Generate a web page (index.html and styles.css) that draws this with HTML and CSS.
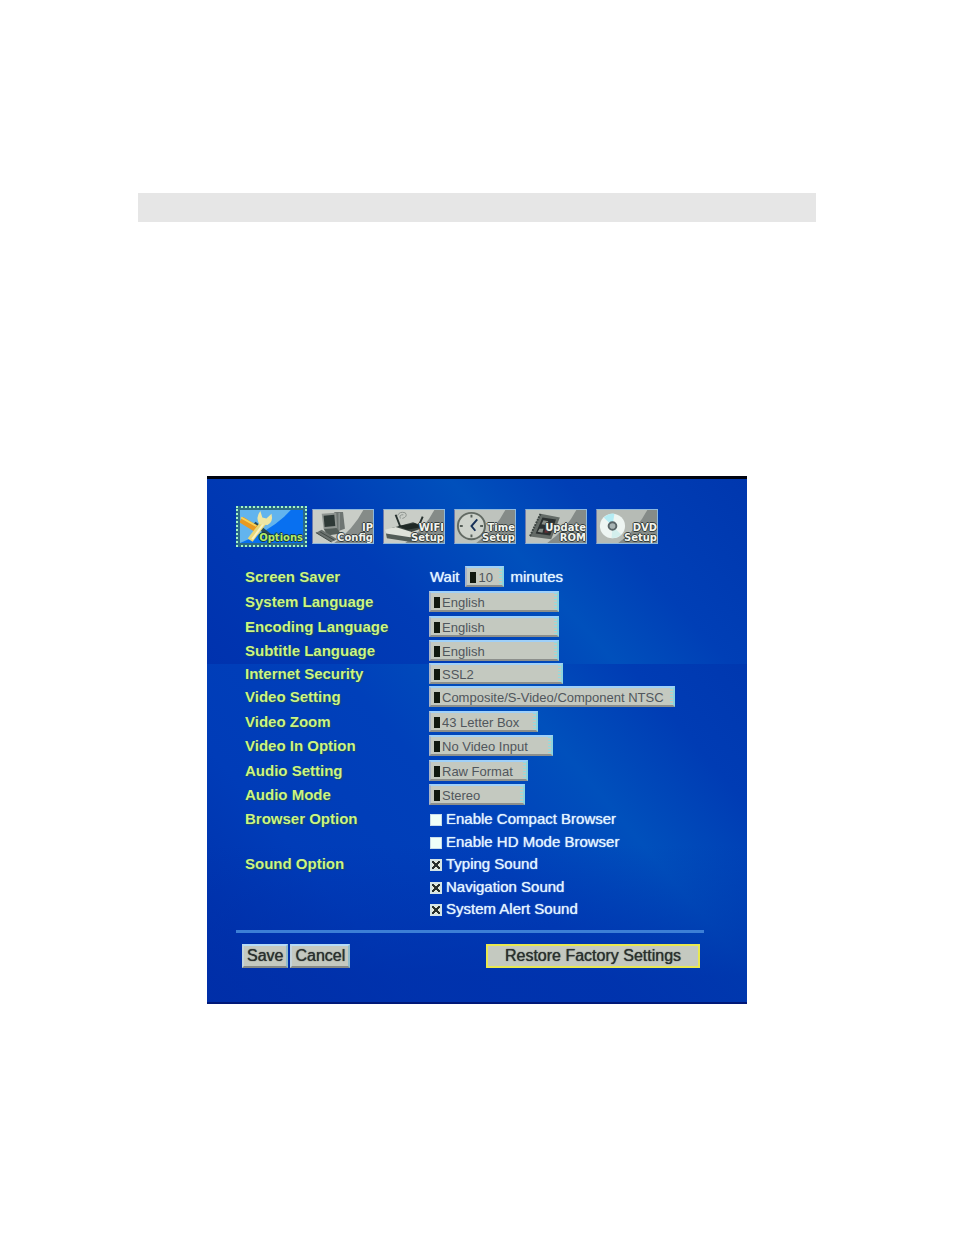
FILE: index.html
```html
<!DOCTYPE html>
<html lang="en">
<head>
<meta charset="utf-8">
<title>Options</title>
<link rel="stylesheet" href="styles.css">
</head>
<body>
<main class="page">
  <div class="band"></div>
  <form class="screen">
    <nav class="tabs">
      <a class="tab tab-active" href="#options">
        <svg class="art" viewBox="0 0 62 35" preserveAspectRatio="none" aria-hidden="true">
          <rect width="62" height="35" fill="#0870f0"/><path d="M0 0H50Q34 20 0 35Z" fill="#62b4ee"/>
          <path d="M14 14L34 31" stroke="#274a58" stroke-width="4" fill="none"/>
          <path d="M1 10L16 20" stroke="#e99a22" stroke-width="7"/><path d="M1 8L16 17" stroke="#f6d45a" stroke-width="2"/>
          <path d="M10 32L24 12" stroke="#e8d878" stroke-width="6"/><path d="M12 31L25 12" stroke="#f7f1c4" stroke-width="2"/>
          <path d="M20 1L22 8L26 9L31 4Q33 13 27 16L19 15Q15 8 20 1Z" fill="#efe6a2"/>
        </svg>
        <span class="caption">Options</span>
      </a>
      <a class="tab" href="#ip">
        <svg class="art" viewBox="0 0 62 35" preserveAspectRatio="none" aria-hidden="true">
          <rect width="62" height="35" fill="#858b88"/><path d="M0 0H52Q42 20 22 35H0Z" fill="#c9cdc7"/>
          <path d="M22 2L31 2L33 20L24 23Z" fill="#6e7572"/><path d="M27 3V21" stroke="#a2a8a4"/>
          <path d="M9 4L24 3L25 19L11 20Z" fill="#8e9490"/>
          <path d="M11 6L22 5L23 17L12 18Z" fill="#2e3936"/><path d="M11 20L24 19L29 25L15 27Z" fill="#555e5a"/>
          <path d="M3 24L9 21L25 31L19 34Z" fill="#6b726f"/><path d="M3 24L19 34M7 23L22 32" stroke="#3f4744"/>
        </svg>
        <span class="caption">IP<br>Config</span>
      </a>
      <a class="tab" href="#wifi">
        <svg class="art" viewBox="0 0 62 35" preserveAspectRatio="none" aria-hidden="true">
          <rect width="62" height="35" fill="#858b88"/><path d="M0 0H52Q42 20 22 35H0Z" fill="#c9cdc7"/>
          <path d="M14 6Q16 1 22 3Q25 7 19 9M17 9Q15 5 20 5" stroke="#8c928e" fill="none"/>
          <path d="M12 5L17 18M40 7L35 19" stroke="#26302e" stroke-width="2"/>
          <path d="M8 19L30 13L43 18L24 25Z" fill="#3d4643"/><path d="M14 17L32 14L40 18L24 21Z" fill="#1f2826"/>
          <path d="M1 21L12 18L28 23L27 30L3 26Z" fill="#dfe2db"/><path d="M2 25L27 29L38 24L38 29L28 34L3 30Z" fill="#535c58"/>
        </svg>
        <span class="caption">WIFI<br>Setup</span>
      </a>
      <a class="tab" href="#time">
        <svg class="art" viewBox="0 0 62 35" preserveAspectRatio="none" aria-hidden="true">
          <rect width="62" height="35" fill="#858b88"/><path d="M0 0H52Q42 20 22 35H0Z" fill="#bec3bd"/>
          <circle cx="17" cy="17" r="14" fill="#ced3cc" stroke="#626a63" stroke-width="2"/>
          <path d="M17 5V8M17 26V29M5 17H8M26 17H29" stroke="#555e58" stroke-width="2"/>
          <path d="M23 10L17 17L21 22" stroke="#173058" stroke-width="2" fill="none"/>
        </svg>
        <span class="caption">Time<br>Setup</span>
      </a>
      <a class="tab" href="#update">
        <svg class="art" viewBox="0 0 62 35" preserveAspectRatio="none" aria-hidden="true">
          <rect width="62" height="35" fill="#858b88"/><path d="M0 0H52Q42 20 22 35H0Z" fill="#bec3bd"/>
          <path d="M15 4L35 8L26 31L4 28Z" fill="#646b67"/><path d="M15 4L4 28" stroke="#3b4340" stroke-width="2" stroke-dasharray="2 1"/>
          <path d="M17 8L31 10L25 27L10 25Z" fill="#2b3030"/>
          <path d="M18 11L23 12L21 16L16 15ZM14 20L18 20L17 24L12 23Z" fill="#888f8a"/><path d="M20 19L25 19L23 24L19 24Z" fill="#643036"/>
        </svg>
        <span class="caption">Update<br>ROM</span>
      </a>
      <a class="tab" href="#dvd">
        <svg class="art" viewBox="0 0 62 35" preserveAspectRatio="none" aria-hidden="true">
          <rect width="62" height="35" fill="#858b88"/><path d="M0 0H52Q42 20 22 35H0Z" fill="#b6bbb5"/>
          <circle cx="16" cy="17" r="13" fill="#eef5f2"/><path d="M16 17L7 8Q13 3 18 4Z" fill="#b4ecf4"/><path d="M16 17L25 26Q21 30 15 30Z" fill="#d3efec"/>
          <circle cx="16" cy="17" r="4" fill="#a8b3b3" stroke="#596466" stroke-width="2"/>
        </svg>
        <span class="caption">DVD<br>Setup</span>
      </a>
    </nav>

    <div class="settings">
      <label class="name" for="saver">Screen Saver</label>
      <div class="value inline"><span>Wait</span><select class="pick pick-num" id="saver"><option>10</option></select><span>minutes</span></div>
      <label class="name" for="syslang">System Language</label>
      <div class="value"><select class="pick pick-lang" id="syslang"><option>English</option></select></div>
      <label class="name" for="enclang">Encoding Language</label>
      <div class="value"><select class="pick pick-lang" id="enclang"><option>English</option></select></div>
      <label class="name" for="sublang">Subtitle Language</label>
      <div class="value"><select class="pick pick-lang" id="sublang"><option>English</option></select></div>
      <label class="name" for="security">Internet Security</label>
      <div class="value"><select class="pick pick-ssl" id="security"><option>SSL2</option></select></div>
      <label class="name" for="video">Video Setting</label>
      <div class="value"><select class="pick pick-video" id="video"><option>Composite/S-Video/Component NTSC</option></select></div>
      <label class="name" for="zoom">Video Zoom</label>
      <div class="value"><select class="pick pick-zoom" id="zoom"><option>43 Letter Box</option></select></div>
      <label class="name" for="input">Video In Option</label>
      <div class="value"><select class="pick pick-input" id="input"><option>No Video Input</option></select></div>
      <label class="name" for="audio">Audio Setting</label>
      <div class="value"><select class="pick pick-audio" id="audio"><option>Raw Format</option></select></div>
      <label class="name" for="mode">Audio Mode</label>
      <div class="value"><select class="pick pick-mode" id="mode"><option>Stereo</option></select></div>
      <span class="name">Browser Option</span>
      <label class="value check"><input class="box" type="checkbox">Enable Compact Browser</label>
      <label class="value check"><input class="box" type="checkbox">Enable HD Mode Browser</label>
      <span class="name">Sound Option</span>
      <label class="value check"><input class="box" type="checkbox" checked>Typing Sound</label>
      <label class="value check"><input class="box" type="checkbox" checked>Navigation Sound</label>
      <label class="value check"><input class="box" type="checkbox" checked>System Alert Sound</label>
    </div>

    <hr class="rule">
    <div class="actions">
      <button class="btn" type="submit">Save</button>
      <button class="btn" type="button">Cancel</button>
      <button class="btn btn-restore" type="reset">Restore Factory Settings</button>
    </div>
  </form>
</main>
</body>
</html>
```

FILE: styles.css
```css
* { box-sizing: border-box; }

body {
  margin: 0;
  background: #fff;
  font-family: "Liberation Sans", Arial, sans-serif;
}

.page { padding: 193px 138px 0; }

.band {
  height: 29px;
  margin-bottom: 254px;
  background: #e6e6e6;
}

.screen {
  margin: 0 69px;
  padding: 27px 43px 34px 29px;
  border-top: 3px solid #000410;
  border-bottom: 2px solid #001878;
  background:
    linear-gradient(transparent 70%, rgba(0, 46, 168, 0.7) 95%),
    linear-gradient(48deg, #0032ae 0%, #003cb6 36%, #0050bc 58%, #003fb6 74%, #0037ae 100%) top / 100% 185px no-repeat,
    linear-gradient(50deg, #002fa8 0%, #003cb8 22%, #0040ba 42%, #0050bc 58%, #003cb4 72%, #0032aa 100%);
}

.tabs {
  display: flex;
  align-items: center;
  gap: 9px;
  height: 41px;
}

.tab {
  display: grid;
  grid-template: 100% / 100%;
  width: 62px;
  height: 35px;
  overflow: hidden;
  border: 1px solid #8db8dc;
  border-left-color: #6f7cae;
  text-decoration: none;
}

.tab-active {
  width: 71px;
  height: 41px;
  margin-right: -4px;
  padding: 2px;
  border: 2px dotted #a5f5c4;
  background: #2b6a88;
}

.art, .caption { grid-area: 1 / 1; }

.art { width: 100%; height: 100%; }

.caption {
  align-self: end;
  justify-self: end;
  color: #f2f4ee;
  font: bold 10px/10px "DejaVu Sans", sans-serif;
  text-align: right;
  text-shadow: 1px 0 #343c3a, -1px 0 #343c3a, 0 1px #343c3a, 0 -1px #343c3a;
}

.tab-active .caption {
  color: #b4ee64;
  text-shadow: 1px 0 #12314c, -1px 0 #12314c, 0 1px #12314c, 0 -1px #12314c;
}

.settings {
  display: grid;
  grid-template-columns: 184px 1fr;
  grid-template-rows: 25px 25px 24px 24px 22px 25px 24px 25px 24px 25px 23px 22px 23px 22px 22px;
  align-items: center;
  margin: 17px 0 11px 9px;
}

.name {
  grid-column: 1;
  color: #cbf582;
  font-size: 15px;
  font-weight: bold;
  text-shadow: 1px 1px 1px #1d4a68;
}

.value {
  display: flex;
  grid-column: 2;
  align-items: center;
  color: #e2f4ff;
  font-size: 15px;
  white-space: nowrap;
}

.inline { gap: 6px; padding-left: 1px; }

.inline, .check { text-shadow: 0 0 1px #e2f4ff; }

.pick {
  height: 21px;
  margin: 0;
  padding: 2px 8px 0 11px;
  appearance: none;
  border: 2px solid;
  border-color: #9fd0f8 #8fd4dc #8c8f8c #a9b5c8;
  border-radius: 0;
  background:
    linear-gradient(#10180f, #10180f) 3px 4px / 6px 11px no-repeat,
    repeating-linear-gradient(#8fdde0 0 1px, #c4c9c0 1px 3px) right / 3px 100% no-repeat,
    #c4c9c0;
  color: #50565c;
  font: 13px/15px "Liberation Sans", Arial, sans-serif;
}

.pick-num { width: 39px; }
.pick-lang { width: 130px; }
.pick-ssl { width: 134px; }
.pick-video { width: 246px; }
.pick-zoom { width: 109px; }
.pick-input { width: 124px; }
.pick-audio { width: 99px; }
.pick-mode { width: 96px; }

.check { gap: 4px; }

.box {
  width: 12px;
  height: 12px;
  margin: 3px 0 0 1px;
  appearance: none;
  border: 1px solid #c8dcea;
  background: #effff8;
}

.box:checked {
  border: 2px solid #d4e4e4;
  background:
    linear-gradient(45deg, transparent 43%, #28302c 43% 57%, transparent 57%),
    linear-gradient(135deg, transparent 43%, #28302c 43% 57%, transparent 57%),
    #e2e8da;
}

.rule {
  height: 3px;
  margin: 0 0 11px;
  border: 0;
  background: #3c7fd6;
}

.actions {
  display: flex;
  gap: 2px;
  padding: 0 4px 0 6px;
}

.btn {
  height: 24px;
  padding: 0 3px;
  border: 2px solid;
  border-color: #b5dcf8 #8fbccc #858985 #c4d4dc;
  background: #c4c9c0;
  color: #2a302e;
  font: 16px/18px "Liberation Sans", Arial, sans-serif;
  text-shadow: 0 0 1px #2a302e;
}

.btn-restore {
  width: 214px;
  margin-left: auto;
  border-color: #e8e850;
}
```
